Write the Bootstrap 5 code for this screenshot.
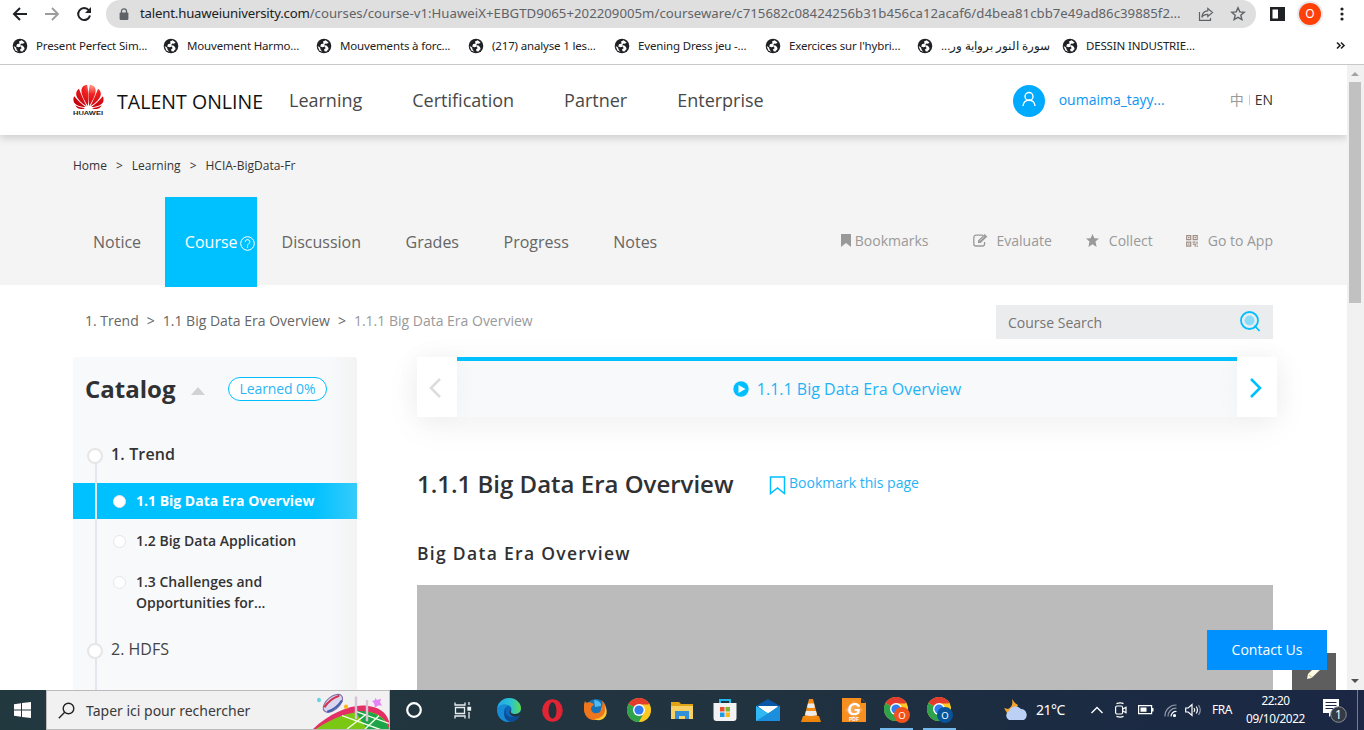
<!DOCTYPE html>
<html lang="en">
<head>
<meta charset="utf-8">
<title>Talent Online</title>
<link href="https://cdn.jsdelivr.net/npm/bootstrap@5.3.0/dist/css/bootstrap.min.css" rel="stylesheet">
<style>
body{font-family:"Open Sans","Noto Sans","Noto Sans CJK SC",sans-serif;width:1364px;height:730px;color:#333;line-height:1.2;white-space:nowrap}
svg{display:block;flex:none}
a{text-decoration:none;color:inherit}
/* browser chrome */
.chrome-ui{height:65px;border-bottom:1px solid #c9c9c9;font-family:"Noto Sans","Open Sans",sans-serif}
.tools{height:28px;padding-left:12px}
.omni{width:1150px;height:28px;margin-left:14px;background:#dfdfdf;border-radius:14px;color:#5f6368;font-size:13.2px;padding-left:13px}
.omni-url{width:1042px;margin-left:11px;letter-spacing:.025px}
.omni-url b{font-weight:400;color:#202124;letter-spacing:-.18px}
.panel-ic{margin-left:14px}
.avatar-o{width:22px;height:22px;background:#ff4107;box-shadow:0 0 0 2px #e8eaed;color:#fff;font-size:12px;margin-left:14px}
.kebab{margin-left:15px}
.marks{display:grid;grid-template-columns:151px 153px 152px 146px 151px 152px 145px 273px auto;height:36px;padding-left:12px;align-items:center;font-size:11.5px;color:#222}
.marks>div{display:flex;align-items:center;gap:8px;letter-spacing:-.16px}
.marks span{font-size:11.5px;letter-spacing:-.05px}
/* page */
.viewport{height:625px}
.page{width:1347px;background:#fff}
.wrap{width:1200px;margin-left:73px}
.site-head{height:70px;box-shadow:0 3px 8px rgba(0,0,0,.16);z-index:2}
.brand-name{font-size:19.5px;color:#111;margin-left:13px;width:172px;padding-top:4px;letter-spacing:.05px}
.main-nav{gap:50px;font-size:18px;color:#484848;padding-top:1px}
.head-user{font-size:14px}
.head-user svg{margin-top:1px}
.user-n{width:185px;padding-left:14px;color:#0b95f5}
.lang-cn{color:#999}
.lang-sep{width:1px;height:10px;background:#ccc;margin:0 5px 0 5px}
.band{height:150px;background:#f4f4f4}
.crumb-top{height:62px;font-size:12px;gap:9px;color:#333}
.tabs{height:90px;font-size:16px;font-weight:400;color:#666}
.tabs .tab{padding:2px 20px 0;height:90px;display:flex;align-items:center;margin-right:4.5px}
.tabs .tab:first-child{margin-right:3.8px}
.tabs .tab.on{width:92px;background:#00c1ff;color:#fff;padding-right:0;gap:2px;margin-right:4.7px}
.acts{font-size:14px;color:#999;padding-bottom:1px}
.acts svg{margin-top:-1px}
.a1{margin:0 44px 0 4px}.a2{margin:0 34px 0 9px}.a3{margin:0 33px 0 10px}.a4{margin-left:10px}
.path-row{height:72px}
.crumb-in{font-size:14px;color:#666;gap:8px;padding-left:12px}
.crumb-in .here{color:#999}
.search{width:277px;height:34px;background:#ebecee;padding:0 12px;font-size:14px;color:#757575;margin-top:2px}
.search span{padding-top:2px}
.search svg{margin-top:-2px}
.side{width:284px;background:linear-gradient(90deg,#f8f9fb 258px,#f3f3f3 284px);border-radius:3px 3px 0 0}
.cat-head{height:64px;padding-left:12px}
.cat-title{font-size:24px;font-weight:700;width:106px;color:#303133}
.pill{width:99px;height:24px;border:1px solid #00bfff;border-radius:12px;color:#2db5f5;font-size:14px;background:#fff;margin-left:23px;padding-top:1px;letter-spacing:-.1px}
.rail{position:absolute;left:22px;top:105px;bottom:0;width:2px;background:#e3e6ec;z-index:1}
.dot{width:16px;height:16px;border:2px solid #e6e6e6;border-radius:50%;background:#fff;flex:none;position:relative;z-index:2}
.dot.sm{width:13px;height:13px;border-width:1px}
.chap{padding-left:14px;font-size:16px;gap:8px}
.ch1{height:62px;padding-top:24px;font-weight:600;letter-spacing:.15px}
.ch1 .dot,.ch2 .dot{margin-top:3px}
.ch2{height:59px;padding-top:1px;color:#444}
.sec{padding-left:40px;gap:10px;font-size:14px;font-weight:600}
.sec.on{height:36px;background:linear-gradient(90deg,#00c1ff 240px,#35cbfb 284px);color:#fff;font-weight:700;position:relative}
.s2{height:41px;padding-top:14px}
.s2 .dot{margin-top:2px}
.s3{height:79px;padding-top:11px;line-height:21px}
.s3 .dot{margin-top:5px}
.main-col{margin-left:60px;width:860px}
.strip{height:60px;background:#f8f9fb;box-shadow:0 8px 36px rgba(0,0,0,.06)}
.step{width:40px;background:#fff;box-shadow:0 0 26px rgba(0,0,0,.04);display:flex;align-items:center;justify-content:center;padding:2px 4px 0 0}
.strip-mid{border-top:4px solid #00c1ff;color:#1fb3f5;font-size:16px;gap:8px}
.strip-mid span{padding-top:1px}
.title-row{height:40px;margin-top:47px}
.h-title{font-size:24px;font-weight:600;color:#303133;width:352px}
.bm{font-size:14px;color:#1fb3f5;gap:3px;padding-bottom:2px}
.sub-t{font-size:17.5px;font-weight:600;letter-spacing:1.3px;margin-top:39px;height:22px;color:#303133}
.video{width:856px;height:105px;background:#bbb;margin-top:20px}
.contact{left:1207px;top:565px;width:120px;height:40px;background:#0091ff;color:#fff;font-size:14px}
.notes{left:1292px;top:588px;width:44px;height:37px;background:#5e5e5e}
.sbar{width:17px;background:#f1f1f1;padding:0 3px 0 2px}
.thumb{height:221px;background:#c1c1c1}
/* taskbar */
.taskbar{height:40px;background:linear-gradient(90deg,#22383f,#21333f 55%,#1b2c42 75%,#1b2744);color:#fff;font-family:"Noto Sans","Open Sans",sans-serif}
.start{width:46px;padding-right:2px}
.tsearch{width:344px;background:#f1f1f1;border:1px solid #bbb;color:#3a3a3a;font-size:14px;padding-left:11px}
.tq{margin-left:11px;padding-top:2px}
.apps{display:grid;grid-template-columns:48px 49px 44px repeat(10,43px);height:40px;justify-items:center;align-items:center;width:571px}
.under{width:33px;height:40px;border-bottom:2px solid #76b9ed;padding-top:2px}
.tray{display:grid;grid-template-columns:33px 54px 24px 24px 26px 21px 23px 33px 69px 47px 4px;margin-left:42px;height:40px;align-items:center;font-size:12px}
.temp{font-size:14px;letter-spacing:-.5px}
.lang-t{margin-left:4px;letter-spacing:-.5px}
.clock{font-size:11.8px;line-height:18px;letter-spacing:-.4px;padding-bottom:2px}
.bell{margin-left:13px}
.edge-line{width:1px;height:40px;background:#76818c}
</style>
</head>
<body class="overflow-hidden bg-white">
<svg width="0" height="0" class="position-absolute">
<symbol id="globe" viewBox="0 0 16 16"><circle cx="8" cy="8" r="7.3" fill="#202124"/><path d="M9.6 2.2 7 3.6 7.6 5.4 5 6.2 4.2 8.6 6.6 9.2 8.8 8.6 9.6 10.2 8 11.4 8.6 13.2 10.4 13.6 12.6 11 12 9 10.4 7.6 8 7.2 9.4 5.6 11 5.8 12.6 4.6Z" fill="#fff"/><path d="m1.6 8 2.4 1.6L4.8 12l1.6 1.8-3-1.4Z" fill="#fff"/></symbol>
<symbol id="chrome" viewBox="0 0 24 24"><circle cx="12" cy="12" r="12" fill="#f7c42d"/><path d="M12 12 1.6 6A12 12 0 0 1 22.4 6Z" fill="#e33b2e"/><path d="M1.6 6A12 12 0 0 0 12 24L17.2 15 12 12Z" fill="#2fa24c"/><path d="M12 6.500H22.4A12 12 0 0 1 12 24l5-9Z" fill="#fbc91f"/><circle cx="12" cy="12" r="6" fill="#fff"/><circle cx="12" cy="12" r="4.600" fill="#2f7df0"/></symbol>
</svg>

<div class="chrome-ui">
  <div class="tools d-flex align-items-center">
    <svg width="16" height="16" viewBox="0 0 16 16" fill="none" stroke="#202124" stroke-width="2"><path d="M15 8H2M8 2 2 8l6 6"/></svg>
    <svg class="ms-3" width="16" height="16" viewBox="0 0 16 16" fill="none" stroke="#9c9c9c" stroke-width="1.800"><path d="M1 8h13M8 2l6 6-6 6"/></svg>
    <svg class="ms-3" width="16" height="16" viewBox="0 0 16 16" fill="none"><path d="M12.800 4.200A6 6 0 1 0 14 9.600" stroke="#202124" stroke-width="2"/><path d="M15 1v6H9Z" fill="#202124"/></svg>
    <div class="omni d-flex align-items-center">
      <svg width="10" height="13" viewBox="0 0 10 13"><rect y="4.500" x=".6" width="8.800" height="7.500" rx="1" fill="#5f6368"/><path d="M2.500 5V3.300a2.500 2.500 0 0 1 5 0V5" fill="none" stroke="#5f6368" stroke-width="1.300"/></svg>
      <div class="omni-url"><b>talent.huaweiuniversity.com</b>/courses/course-v1:HuaweiX+EBGTD9065+202209005m/courseware/c715682c08424256b31b456ca12acaf6/d4bea81cbb7e49ad86c39885f2...</div>
      <svg class="ms-3" width="16" height="16" viewBox="0 0 16 16" fill="none" stroke="#5f6368" stroke-width="1.200"><path d="M1.500 6v8.400h11V12"/><path d="M9.800 2.500 14.500 6.500 9.800 10.500V8.300C7 8.300 5 9 3.800 11.400 4 7.500 6 5 9.800 4.800Z"/></svg>
      <svg class="ms-3" width="16" height="16" viewBox="0 0 16 16" fill="none" stroke="#5f6368" stroke-width="1.400"><path d="m8 1.800 1.800 4.100 4.400.4-3.400 2.900 1.100 4.400L8 11.300l-3.900 2.300 1.100-4.400L1.800 6.300l4.400-.4Z"/></svg>
    </div>
    <svg class="panel-ic" width="15" height="14" viewBox="0 0 15 14"><path d="M0 0h15v14H0ZM2.500 2.500v9h5.500v-9Z" fill="#202124" fill-rule="evenodd"/></svg>
    <div class="avatar-o rounded-circle d-flex align-items-center justify-content-center">O</div>
    <svg class="kebab" width="12" height="16" viewBox="0 0 12 16" fill="#202124"><circle cx="6" cy="3" r="1.600"/><circle cx="6" cy="8" r="1.600"/><circle cx="6" cy="13" r="1.600"/></svg>
  </div>
  <div class="marks">
    <div><svg width="16" height="16"><use href="#globe"/></svg>Present Perfect Sim...</div>
    <div><svg width="16" height="16"><use href="#globe"/></svg>Mouvement Harmo...</div>
    <div><svg width="16" height="16"><use href="#globe"/></svg>Mouvements à forc...</div>
    <div><svg width="16" height="16"><use href="#globe"/></svg>(217) analyse 1 les...</div>
    <div><svg width="16" height="16"><use href="#globe"/></svg>Evening Dress jeu -...</div>
    <div><svg width="16" height="16"><use href="#globe"/></svg>Exercices sur l'hybri...</div>
    <div><svg width="16" height="16"><use href="#globe"/></svg><span dir="rtl">سورة النور برواية ور...</span></div>
    <div><svg width="16" height="16"><use href="#globe"/></svg>DESSIN INDUSTRIE...</div>
    <svg width="12" height="10" viewBox="0 0 12 10" fill="none" stroke="#202124" stroke-width="1.600"><path d="m2 1.500 3 3-3 3M6 1.500l3 3-3 3"/></svg>
  </div>
</div>

<div class="viewport d-flex position-relative overflow-hidden">
  <div class="page overflow-hidden">
    <header class="site-head bg-white position-relative">
      <div class="wrap h-100 d-flex align-items-center">
        <svg width="31" height="32" viewBox="0 0 31 32"><defs><radialGradient id="hw" gradientUnits="userSpaceOnUse" cx="19" cy="2" r="24"><stop offset="0" stop-color="#ff9a8a"/><stop offset=".35" stop-color="#f12020"/><stop offset="1" stop-color="#c4000c"/></radialGradient></defs>
          <g fill="url(#hw)"><path d="M14.800 22C10.500 15 8 10 8.500 5.500 9 2.500 11.500 1 14 .8 15.600 6 15.800 14 14.800 22Z"/><path d="M16.200 22C20.500 15 23 10 22.500 5.500 22 2.500 19.500 1 17 .8 15.400 6 15.200 14 16.200 22Z"/><path d="M13.600 22.300C8.500 19 3.500 14.500 3.200 10.500 3 7.500 4.300 5.800 6 4.700 8 10 11 17 13.600 22.300Z"/><path d="M17.400 22.300C22.500 19 27.500 14.500 27.800 10.500 28 7.500 26.700 5.800 25 4.700 23 10 20 17 17.400 22.300Z"/><path d="M12.600 23C6.500 23 .8 20.500.5 16.500.3 14.300.6 13.200 1.200 12.200 4.500 16 9 20.500 12.600 23Z"/><path d="M18.400 23C24.500 23 30.200 20.500 30.500 16.500 30.700 14.300 30.400 13.200 29.800 12.200 26.500 16 22 20.500 18.400 23Z"/><path d="M12 23.900C9 26 4.300 25.500 2.300 21.300 5.500 23.300 9 23.900 12 23.900Z"/><path d="M19 23.900C22 26 26.700 25.500 28.700 21.300 25.500 23.300 22 23.900 19 23.900Z"/></g>
          <text x="0" y="31" font-family="Liberation Sans" font-weight="700" font-size="6" textLength="30" lengthAdjust="spacingAndGlyphs" fill="#2a1a1a">HUAWEI</text></svg>
        <div class="brand-name">TALENT ONLINE</div>
        <nav class="main-nav d-flex"><a>Learning</a><a>Certification</a><a>Partner</a><a>Enterprise</a></nav>
        <div class="head-user ms-auto d-flex align-items-center">
          <svg width="32" height="32" viewBox="0 0 32 32"><circle cx="16" cy="16" r="16" fill="#00aaff"/><g fill="none" stroke="#fff" stroke-width="1.400"><circle cx="16" cy="11.500" r="4"/><path d="M10 21a6 6 0 0 1 12 0"/></g></svg>
          <span class="user-n">oumaima_tayy...</span>
          <span class="lang-cn">中</span><span class="lang-sep"></span><span>EN</span>
        </div>
      </div>
    </header>
    <div class="band">
      <div class="wrap">
        <div class="crumb-top d-flex align-items-center"><span>Home</span><span>&gt;</span><span>Learning</span><span>&gt;</span><span>HCIA-BigData-Fr</span></div>
        <div class="d-flex align-items-center justify-content-between">
          <div class="tabs d-flex">
            <a class="tab">Notice</a>
            <a class="tab on">Course<svg width="15" height="15" viewBox="0 0 15 15" fill="none" stroke="#fff"><circle cx="7.500" cy="7.500" r="6.800"/><path d="M5.200 6a2.300 2.300 0 1 1 3.300 2c-.8.4-1 .8-1 1.500M7.500 10.500v1.300"/></svg></a>
            <a class="tab">Discussion</a><a class="tab">Grades</a><a class="tab">Progress</a><a class="tab">Notes</a>
          </div>
          <div class="acts d-flex align-items-center">
            <svg width="10" height="13" viewBox="0 0 10 13"><path d="M0 0h10v13L5 9 0 13Z" fill="#999"/></svg><span class="a1">Bookmarks</span>
            <svg width="15" height="13" viewBox="0 0 15 13"><path d="M10 1.200H3A2.200 2.200 0 0 0 .8 3.400v6.400A2.200 2.200 0 0 0 3 12h6.400a2.200 2.200 0 0 0 2.200-2.200V8" fill="none" stroke="#999" stroke-width="1.300"/><path d="M5 9V6.500L11.600 0 14.300 2.500 7.600 9Z" fill="#999"/><path d="m6.500 7 5-4.800" stroke="#f4f4f4" stroke-width=".6"/></svg><span class="a2">Evaluate</span>
            <svg width="13" height="13" viewBox="0 0 13 13"><path d="m6.500 0 1.900 4.200 4.600.4-3.500 3L10.600 13 6.500 10.200 2.400 13l1.100-5.400L0 4.600l4.600-.4Z" fill="#999"/></svg><span class="a3">Collect</span>
            <svg width="12" height="12" viewBox="0 0 12 12" fill="none" stroke="#a08e84" stroke-width="1.200"><path d="M.7.7h4v4h-4ZM7.200.7h4v4h-4ZM.7 7.200h4v4h-4ZM2 2.700h1.500M8.500 2.700H10M2 9.200h1.500M6.500 7.200h3M11 6.500v3M6.800 9.200h2.400v2.500M11.200 10.500v1.500"/></svg><span class="a4">Go to App</span>
          </div>
        </div>
      </div>
    </div>
    <div class="path-row wrap d-flex align-items-center justify-content-between">
      <div class="crumb-in d-flex"><span>1. Trend</span><span>&gt;</span><span>1.1 Big Data Era Overview</span><span>&gt;</span><span class="here">1.1.1 Big Data Era Overview</span></div>
      <div class="search d-flex align-items-center justify-content-between"><span>Course Search</span>
        <svg width="21" height="21" viewBox="0 0 21 21"><circle cx="9.500" cy="9.500" r="8.500" fill="none" stroke="#00bfff" stroke-width="1.800"/><circle cx="9.500" cy="9.500" r="5" fill="#8bdcf8"/><path d="m14.500 14.500 5 5.500" stroke="#00bfff" stroke-width="1.800"/></svg></div>
    </div>
    <div class="wrap d-flex">
      <aside class="side position-relative flex-shrink-0">
        <div class="rail"></div>
        <div class="cat-head d-flex align-items-center"><span class="cat-title">Catalog</span><svg class="mt-1" width="14" height="8" viewBox="0 0 14 8"><path d="M0 8 7 0l7 8Z" fill="#d0d2d3"/></svg><span class="pill d-flex align-items-center justify-content-center">Learned 0%</span></div>
        <div class="chap ch1 d-flex"><span class="dot"></span><span>1. Trend</span></div>
        <div class="sec on d-flex align-items-center"><span class="dot sm"></span>1.1 Big Data Era Overview</div>
        <div class="sec s2 d-flex"><span class="dot sm"></span><span>1.2 Big Data Application</span></div>
        <div class="sec s3 d-flex"><span class="dot sm"></span><span>1.3 Challenges and<br>Opportunities for...</span></div>
        <div class="chap ch2 d-flex"><span class="dot"></span><span>2. HDFS</span></div>
      </aside>
      <section class="main-col flex-shrink-0">
        <div class="strip d-flex">
          <div class="step"><svg width="13" height="20" viewBox="0 0 13 20" fill="none" stroke="#ddd" stroke-width="2.600"><path d="M11 1 2 10l9 9"/></svg></div>
          <div class="strip-mid flex-fill d-flex align-items-center justify-content-center"><svg width="16" height="16" viewBox="0 0 16 16"><circle cx="8" cy="8" r="7.700" fill="#00bfff"/><path d="M5.500 4v8l7-4Z" fill="#fff"/></svg><span>1.1.1 Big Data Era Overview</span></div>
          <div class="step"><svg width="13" height="20" viewBox="0 0 13 20" fill="none" stroke="#00bfff" stroke-width="2.600"><path d="m2 1 9 9-9 9"/></svg></div>
        </div>
        <div class="title-row d-flex align-items-center"><span class="h-title">1.1.1 Big Data Era Overview</span><span class="bm d-flex align-items-center"><svg class="mt-1" width="17" height="19" viewBox="0 0 17 19" fill="none" stroke="#00bfff" stroke-width="1.500"><path d="M1.500 1h14v16.500l-7-5.500-7 5.500Z"/></svg>Bookmark this page</span></div>
        <div class="sub-t">Big Data Era Overview</div>
        <div class="video"></div>
      </section>
    </div>
  </div>
  <div class="sbar d-flex flex-column align-items-stretch">
    <svg width="12" height="17" viewBox="0 0 12 17"><path d="m2 11 4-4 4 4Z" fill="#a3a3a3"/></svg>
    <div class="thumb"></div>
    <svg class="mt-auto" width="12" height="17" viewBox="0 0 12 17"><path d="m2 6 4 4 4-4Z" fill="#505050"/></svg>
  </div>
  <div class="notes position-absolute"><svg width="44" height="37" viewBox="0 0 44 37"><path d="m15 26 1-5 9-9 4 4-9.500 9Z" fill="#fffbe0"/><path d="m17 22 3 2.500" stroke="#c9b98a"/></svg></div>
  <div class="contact position-absolute d-flex align-items-center justify-content-center">Contact Us</div>
</div>

<div class="taskbar d-flex">
  <div class="start d-flex align-items-center justify-content-center"><svg width="17" height="16" viewBox="0 0 17 16" fill="#fff"><path d="M0 2.200 7 1.200v6.300H0ZM8 1l9-1v7.500H8ZM0 8.500h7v6.300l-7-1ZM8 8.500h9V16l-9-1Z"/></svg></div>
  <div class="tsearch d-flex align-items-center">
    <svg width="17" height="17" viewBox="0 0 17 17" fill="none" stroke="#222" stroke-width="1.400"><circle cx="10.500" cy="6.500" r="5.300"/><path d="M6.700 10.300.8 16.200"/></svg>
    <span class="tq">Taper ici pour rechercher</span>
    <svg class="ms-auto" width="76" height="38" viewBox="0 0 76 34" preserveAspectRatio="none"><path d="M0 34C16 20 38 12 52 13c14 1 21 6 24 14v7Z" fill="#e42f66"/><path d="M3 34C24 21 44 17 58 19c10 2 16 8 18 15Z" fill="#7ac714"/><path d="M42 18c16-1 30 4 34 16H54Z" fill="#1ba548"/><g stroke="#f3ffe9" stroke-width="1.300"><path d="m29 22 40 13M42 18l34 11M53 21 34 34M66 22 52 34"/></g><path d="M43 5v20M54 8v19" stroke="#d6c4d4" stroke-width="2.400"/><g transform="translate(-1 -1) rotate(-35 20 9)"><ellipse cx="19" cy="12" rx="11" ry="6" fill="#d9d7ef" stroke="#7a6ba8"/><path d="M10 10c6-2 12-2 18 0" stroke="#d3344c" stroke-width="2" fill="none"/><path d="M10 15c6 2 12 2 18 0" stroke="#4360af" stroke-width="2" fill="none"/></g><circle cx="6" cy="8" r="2" fill="#67d3e6"/><circle cx="33" cy="14" r="2" fill="#fcb315"/><path d="m62 6 2 2 4-1-1 3 2 3-4 0-3 2-1-4-2-2 3-1Z" fill="#e485f7"/></svg>
  </div>
  <div class="apps">
    <svg width="18" height="18" viewBox="0 0 18 18"><circle cx="9" cy="9" r="6.800" fill="none" stroke="#fff" stroke-width="2.200"/></svg>
    <svg width="18" height="17" viewBox="0 0 18 17" fill="none" stroke="#e8edf0" stroke-width="1.300"><path d="M1 .5V3h10V.5M1 16.500V14h10v2.500M1.500 5.500h9v6h-9ZM15 0v3M15 10v6.500"/><path d="M14 5.500h2.500V8H14Z" fill="#fff"/></svg>
    <svg width="24" height="24" viewBox="0 0 24 24"><defs><linearGradient id="eg"><stop stop-color="#22a5e8"/><stop offset=".6" stop-color="#2bc4cf"/><stop offset="1" stop-color="#62d94c"/></linearGradient></defs><circle cx="12" cy="12" r="12" fill="#0c68b8"/><path d="M0 11C1 4 6 0 12 0c7 0 12 5 12 10 0 4-3 6-6 6-3 0-5-1-4-3 1-1 1-5-4-6C5 6 1 9 0 11Z" fill="url(#eg)"/><path d="M0 11C2 7 7 5 11 8c-4 1-5 5-3 9 2 4 7 4 14 1-3 4-7 6-10 6C4 24 0 18 0 11Z" fill="#178bd6"/><path d="M10 10c-3 4-1 9 5 9 3 0 5 0 8-2-3 5-6 7-10 7-6-2-8-9-3-14Z" fill="#0b4d96"/><path d="M14 12c-1 3 1 4 4 4 3 0 5-1 6-3l0 3-2 2c-3 1-6 1-8-1-2-2-2-4 0-5Z" fill="#21333f"/></svg>
    <svg width="21" height="23" viewBox="0 0 21 23"><ellipse cx="10.500" cy="11.500" rx="10.300" ry="11.300" fill="#e32434"/><ellipse cx="10.500" cy="11.500" rx="4" ry="8.200" fill="#22323d"/><path d="M16 3a12 12 0 0 1 0 17c5-5 5-12 0-17Z" fill="#b70f20"/></svg>
    <svg width="23" height="23" viewBox="0 0 23 23"><circle cx="12" cy="10.500" r="10.500" fill="#1673b8"/><path d="M10 1c4 0 8 3 7 6l-6 1Z" fill="#52bced"/><path d="M1 2c1 2 2 2 4 1l5 2-3 4c0 4 3 6 6 5 3 0 4-2 4-5 2-3 2-6 0-8 5 3 6 9 4 13-3 7-12 9-17 5C-1 15-1 7 1 2Z" fill="#ef761c"/><path d="M19 3c5 8 1 17-9 17 8 4 15-3 12-11Z" fill="#ffc734"/></svg>
    <svg width="24" height="24"><use href="#chrome"/></svg>
    <svg width="22" height="19" viewBox="0 0 22 19"><path d="M0 1h8l2 2h12v4H0Z" fill="#dfa416"/><path d="M0 5h22v13H0Z" fill="#f8d166"/><path d="M4 18v-8h14v8h-4v-3H8v3Z" fill="#3191d8"/></svg>
    <svg width="24" height="24" viewBox="0 0 24 24"><path d="M7 6V2h10v4" fill="none" stroke="#22b7ec" stroke-width="2"/><path d="M.5 5h23v15a3 3 0 0 1-3 3h-17a3 3 0 0 1-3-3Z" fill="#f2f2f3"/><path d="M7 9h4.500v4.500H7Z" fill="#e7502f"/><path d="M12.500 9H17v4.500h-4.500Z" fill="#7bb82b"/><path d="M7 14.500h4.500V19H7Z" fill="#1d9be2"/><path d="M12.500 14.500H17V19h-4.500Z" fill="#fdb81b"/></svg>
    <svg width="24" height="23" viewBox="0 0 24 23"><path d="M0 7 12 0l12 7v15H0Z" fill="#0a57a6"/><path d="M2 7h20L12 15Z" fill="#fff"/><path d="m0 7 12 7 12-7v15H0Z" fill="#2fb8f3"/><path d="M24 7v15H0L24 7Z" fill="#1b8fdd"/><path d="m2 7.500 10 6.500 10-6.500Z" fill="#fff"/></svg>
    <svg width="20" height="23" viewBox="0 0 20 23"><path d="M2 17h16l2 6H0Z" fill="#ed850a"/><path d="M8 0h4l5 19q-7 3-14 0Z" fill="#f28a15"/><path d="m7 4.500-1 4q4 1 8 0l-1-4ZM5 12l-1 4q6 2 12 0l-1-4Z" fill="#ececec"/></svg>
    <svg width="24" height="24" viewBox="0 0 24 24"><path d="M0 0h19l5 5v19H0Z" fill="#f78e20"/><path d="M19 0v5h5Z" fill="#1f3240"/><path d="m12 3 9 9-9 9-9-9Z" fill="#faa64b"/><text x="5.500" y="16.500" font-family="Liberation Sans" font-weight="700" font-style="italic" font-size="17" fill="#fff">G</text><text x="7" y="23" font-family="Liberation Sans" font-weight="700" font-size="5" fill="#fff">PDF</text></svg>
    <div class="under d-flex align-items-center justify-content-center"><svg width="26" height="26" viewBox="0 0 26 26"><use href="#chrome" width="24" height="24"/><circle cx="18" cy="18" r="8" fill="#f1511b"/><text x="18" y="21.500" text-anchor="middle" font-size="9.500" fill="#fff">O</text></svg></div>
    <div class="under d-flex align-items-center justify-content-center"><svg width="26" height="26" viewBox="0 0 26 26"><use href="#chrome" width="24" height="24"/><circle cx="18" cy="18" r="8" fill="#07549b"/><text x="18" y="21.500" text-anchor="middle" font-size="9.500" fill="#fff">O</text></svg></div>
  </div>
  <div class="tray">
    <svg width="25" height="22" viewBox="0 0 25 22"><path d="M9 0c1 5 0 8-4 10L1 9l3 5 8-1 3-7-3-2Z" fill="#f5a32b"/><path d="M6 21a5 5 0 0 1 0-9 7 7 0 0 1 12-2 6 6 0 0 1 3 11Z" fill="#bcd0f5"/></svg>
    <span class="temp">21°C</span>
    <svg width="14" height="8" viewBox="0 0 14 8" fill="none" stroke="#fff" stroke-width="1.400"><path d="m1.500 7 5.500-5.500L12.500 7"/></svg>
    <svg width="13" height="16" viewBox="0 0 13 16" fill="none" stroke="#fff" stroke-width="1.200"><rect x="1.600" y="4" width="7" height="8" rx="1.500"/><path d="m9 7 3-1.800v5.600L9 9M2.500 1.600q4-1.500 7 0M2.500 14.400q4 1.500 7 0"/></svg>
    <svg width="16" height="10" viewBox="0 0 16 10"><path d="M.6.6h13v8H.6Z" fill="none" stroke="#fff" stroke-width="1.200"/><path d="M2.500 2.500h6v4.200h-6ZM14 3h1.500v3.500H14Z" fill="#fff"/></svg>
    <svg width="13" height="13" viewBox="0 0 13 13" fill="none" stroke="#fff" stroke-width="1.200"><circle cx="10.500" cy="11.500" r="1" fill="#fff"/><path d="M7 12.500A5 5 0 0 1 12.500 7.500"/><path d="M4 12.500A8 8 0 0 1 12.500 4.200M1 12.500A11 11 0 0 1 12.500 1" stroke="#8f98a8"/></svg>
    <svg width="17" height="14" viewBox="0 0 17 14" fill="none" stroke="#fff" stroke-width="1.200"><path d="M.7 5v4h2.500L7 12.500v-11L3.200 5Z"/><path d="M9 5q1.500 2 0 4M11.200 3.500q2.500 3.500 0 7"/><path d="M13.500 2q3.500 5 0 10" stroke="#8f98a8"/></svg>
    <span class="lang-t">FRA</span>
    <div class="clock text-center">22:20<br>09/10/2022</div>
    <svg class="bell" width="26" height="26" viewBox="0 0 26 26"><path d="M0 2h16v14H10l-4 4v-4H0Z" fill="#fff"/><path d="M2.500 5.500h11M2.500 8.500h11M2.500 11.500h8" stroke="#1b2744"/><circle cx="15.500" cy="17.500" r="7.800" fill="#353a45" stroke="#8a8f97"/><text x="15.500" y="22" text-anchor="middle" font-size="12" fill="#fff">1</text></svg>
    <div class="edge-line"></div>
  </div>
</div>
<script src="https://cdn.jsdelivr.net/npm/bootstrap@5.3.0/dist/js/bootstrap.bundle.min.js"></script>
</body>
</html>
